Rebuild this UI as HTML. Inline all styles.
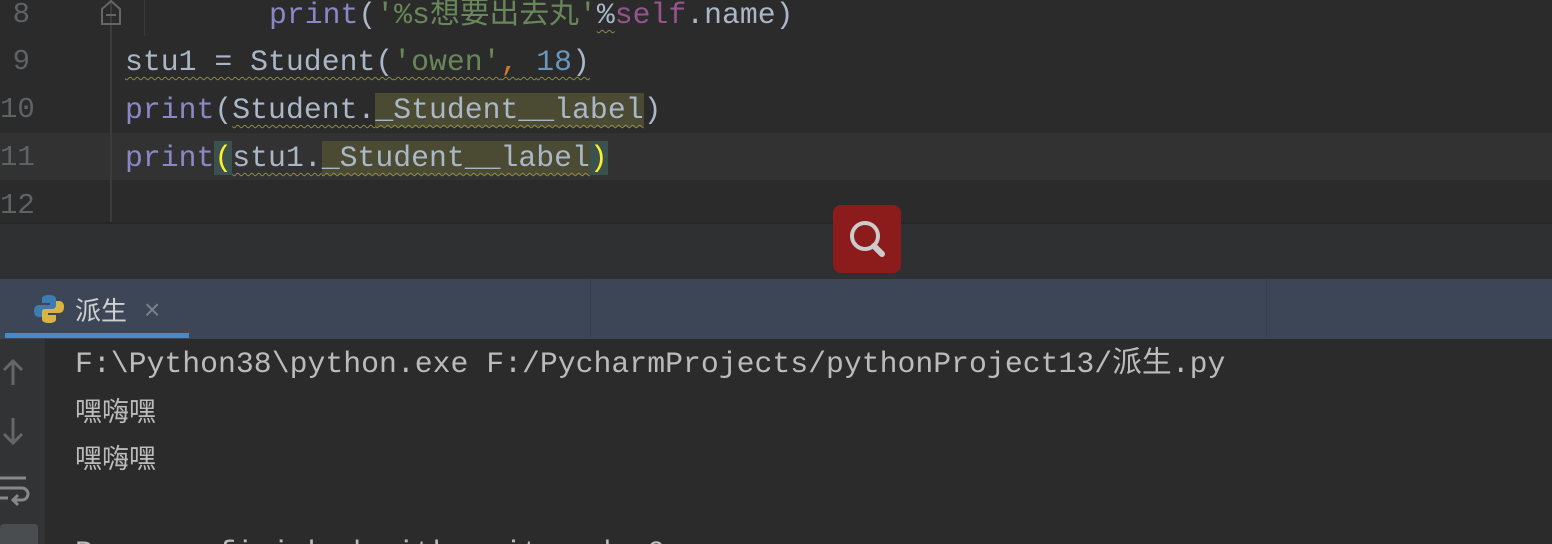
<!DOCTYPE html>
<html style="overflow:hidden;width:1552px;height:544px"><head><meta charset="utf-8"><style>
html,body{overflow:hidden}
body{margin:0;width:1552px;height:544px;overflow:hidden;background:#2b2b2b;position:relative;font-family:"Liberation Mono","Noto Sans CJK SC",monospace;}
.ln{position:absolute;left:0;width:30px;text-align:right;color:#606366;font-size:29px;line-height:48px;}
.c{position:absolute;left:125px;font-size:29.8px;line-height:48px;color:#a9b7c6;white-space:pre;}
.p{color:#8888c6}.s{color:#6a8759}.n{color:#6897bb}.k{color:#94558d}
.w{text-decoration:underline wavy #8c8a4a;text-decoration-thickness:1px;text-underline-offset:6px}
.h{background:#4b4a33}
.m{background:#3b514d;color:#ffef28}
.o{position:absolute;left:75px;font-size:29.8px;line-height:47px;color:#bbbbbb;white-space:pre;}
</style></head><body>
<div style="position:absolute;left:0;top:133px;width:1552px;height:47px;background:#323232"></div>
<div style="position:absolute;left:110px;top:0;width:2px;height:222px;background:#3c3c3c"></div>
<div style="position:absolute;left:144px;top:0;width:1px;height:36px;background:#3a3a3a"></div>
<svg style="position:absolute;left:99px;top:0" width="24" height="26"><path d="M3 24V9L12 1L21 9V24Z" fill="none" stroke="#666" stroke-width="2"/><path d="M7 15H17" stroke="#666" stroke-width="2"/></svg>
<div class="ln" style="top:-9px">8</div>
<div class="ln" style="top:38px">9</div>
<div class="ln" style="top:86px">10</div>
<div class="ln" style="top:134px">11</div>
<div class="ln" style="top:182px">12</div>
<div class="c" style="top:-9px;left:269px"><span class="p">print</span>(<span class="s">'%s想要出去丸'</span><span class="w">%</span><span class="k">self</span>.name)</div>
<div class="c" style="top:38px"><span class="w">stu1 = Student(<span class="s">'owen'</span><span style="color:#cc7832">,</span> <span class="n">18</span>)</span></div>
<div class="c" style="top:86px"><span class="p">print</span>(<span class="w">Student.<span class="h">_Student__label</span></span>)</div>
<div class="c" style="top:134px"><span class="p">print</span><span class="m">(</span><span class="w">stu1.<span class="h">_Student__label</span></span><span class="m">)</span></div>
<div style="position:absolute;left:0;top:222px;width:1552px;height:56px;background:#2f3032;border-top:2px solid #262626"></div>
<div style="position:absolute;left:833px;top:205px;width:68px;height:68px;border-radius:8px;background:#8c1c1c"></div>
<svg style="position:absolute;left:833px;top:205px" width="68" height="68"><circle cx="32" cy="31" r="13" fill="none" stroke="#ccc" stroke-width="4"/><path d="M41 41L49 49" stroke="#ccc" stroke-width="6" stroke-linecap="round"/></svg>
<div style="position:absolute;left:0;top:279px;width:1552px;height:60px;background:#3c4656"></div>
<div style="position:absolute;left:590px;top:279px;width:1px;height:58px;background:#34404e"></div>
<div style="position:absolute;left:1266px;top:279px;width:1px;height:58px;background:#34404e"></div>
<div style="position:absolute;left:5px;top:333px;width:184px;height:5px;background:#4a88c7"></div>
<svg style="position:absolute;left:33px;top:293px" width="32" height="32"><path d="M16 2C9 2 9 5 9 6V10H17V12H6C3 12 1 14 1 18C1 22 3 24 6 24H9V20C9 17 11 16 13 16H20C22 16 23 15 23 13V6C23 3 20 2 16 2Z" fill="#3d7cb2"/><path d="M16 30C23 30 23 27 23 26V22H15V20H26C29 20 31 18 31 14C31 10 29 8 26 8H23V12C23 15 21 16 19 16H12C10 16 9 17 9 19V26C9 29 12 30 16 30Z" fill="#d8b540"/></svg>
<div style="position:absolute;left:75px;top:292px;font-family:'Noto Sans CJK SC',sans-serif;font-size:26px;color:#d0d0d0;line-height:36px">派生</div>
<div style="position:absolute;left:144px;top:292px;font-family:'Liberation Sans',sans-serif;font-size:28px;color:#7a818a;line-height:36px">×</div>
<div style="position:absolute;left:0;top:339px;width:45px;height:205px;background:#313335;border-right:1px solid #2a2a2a"></div>
<svg style="position:absolute;left:0;top:355px" width="45" height="189"><path d="M13 30V6M4 15L13 6L22 15" fill="none" stroke="#666" stroke-width="3"/><path d="M13 63V88M4 79L13 88L22 79" fill="none" stroke="#666" stroke-width="3"/><path d="M0 123H26M0 133H22A6 6 0 0 1 22 145H14M18 140L13 145L18 150M0 143H8" fill="none" stroke="#888" stroke-width="3"/><rect x="0" y="169" width="38" height="24" rx="4" fill="#4a4d50"/></svg>
<div class="o" style="top:341px">F:\Python38\python.exe F:/PycharmProjects/pythonProject13/派生.py</div>
<div class="o" style="top:386px;font-family:'Noto Sans CJK SC',sans-serif;font-size:27px">嘿嗨嘿</div>
<div class="o" style="top:433px;font-family:'Noto Sans CJK SC',sans-serif;font-size:27px">嘿嗨嘿</div>
<div style="position:absolute;left:75px;top:530px;width:800px;height:14px;overflow:hidden"><div class="o" style="left:0;top:0">Process finished with exit code 0</div></div>
</body></html>
